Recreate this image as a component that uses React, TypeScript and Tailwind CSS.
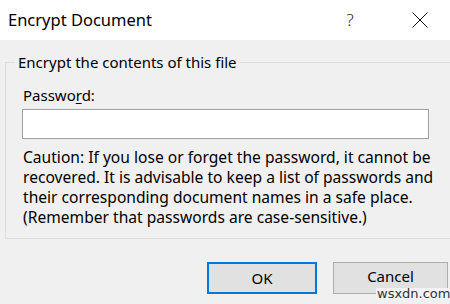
import React from "react";

export default function App() {
  const font = { fontFamily: '"Noto Sans", "Segoe UI", Arial, sans-serif' };
  return (
    <div className="w-[450px] h-[304px] flex flex-col overflow-hidden relative text-black" style={font}>
      <div className="h-[40px] bg-white flex items-center pl-[8px] shrink-0">
        <span className="text-[16.5px] flex-1">Encrypt Document</span>
        <span className="text-[17px] w-[20px] text-center mr-[52px] font-light text-[#222]">?</span>
        <svg width="16" height="16" viewBox="0 0 16 16" className="mr-[22px]">
          <path d="M0.5 0.5 L15.5 15.5 M15.5 0.5 L0.5 15.5" stroke="#111" strokeWidth="1" fill="none" />
        </svg>
      </div>
      <div className="flex-1 bg-[#f0f0f0] flex flex-col px-[5px] pt-[13px]">
        <fieldset className="border border-[#dcdcdc] w-[440px] h-[186px] px-0">
          <legend className="ml-[9px] px-[3px] text-[15px] leading-[18px]">Encrypt the contents of this file</legend>
          <div className="px-[17px] flex flex-col">
            <div className="text-[15px] leading-[20px] mt-[14px]">
              Passwo<span className="underline underline-offset-2">r</span>d:
            </div>
            <div className="mt-[4px] h-[30px] w-[407px] -ml-[1px] bg-white border border-[#a0a0a0]" />
            <p className="text-[15.6px] leading-[20px] mt-[8px] whitespace-nowrap">
              Caution: If you lose or forget the password, it cannot be
              <br />
              recovered. It is advisable to keep a list of passwords and
              <br />
              their corresponding document names in a safe place.
              <br />
              (Remember that passwords are case-sensitive.)
            </p>
          </div>
        </fieldset>
        <div className="flex justify-end gap-[16px] mt-[23px] -mr-[3px]">
          <button className="w-[110px] h-[32px] bg-[#e1e1e1] border-2 border-[#0078d7] text-[15px]">OK</button>
          <button className="w-[115px] h-[32px] bg-[#e1e1e1] border border-[#adadad] text-[15px] leading-[20px] pb-[4px]">Cancel</button>
        </div>
      </div>
      <span className="absolute left-[376px] top-[288px] text-[13px] leading-[11px] text-[#333] bg-[#f2f2f2] px-[1px]" style={{ fontFamily: '"DejaVu Sans", sans-serif' }}>wsxdn.com</span>
    </div>
  );
}
